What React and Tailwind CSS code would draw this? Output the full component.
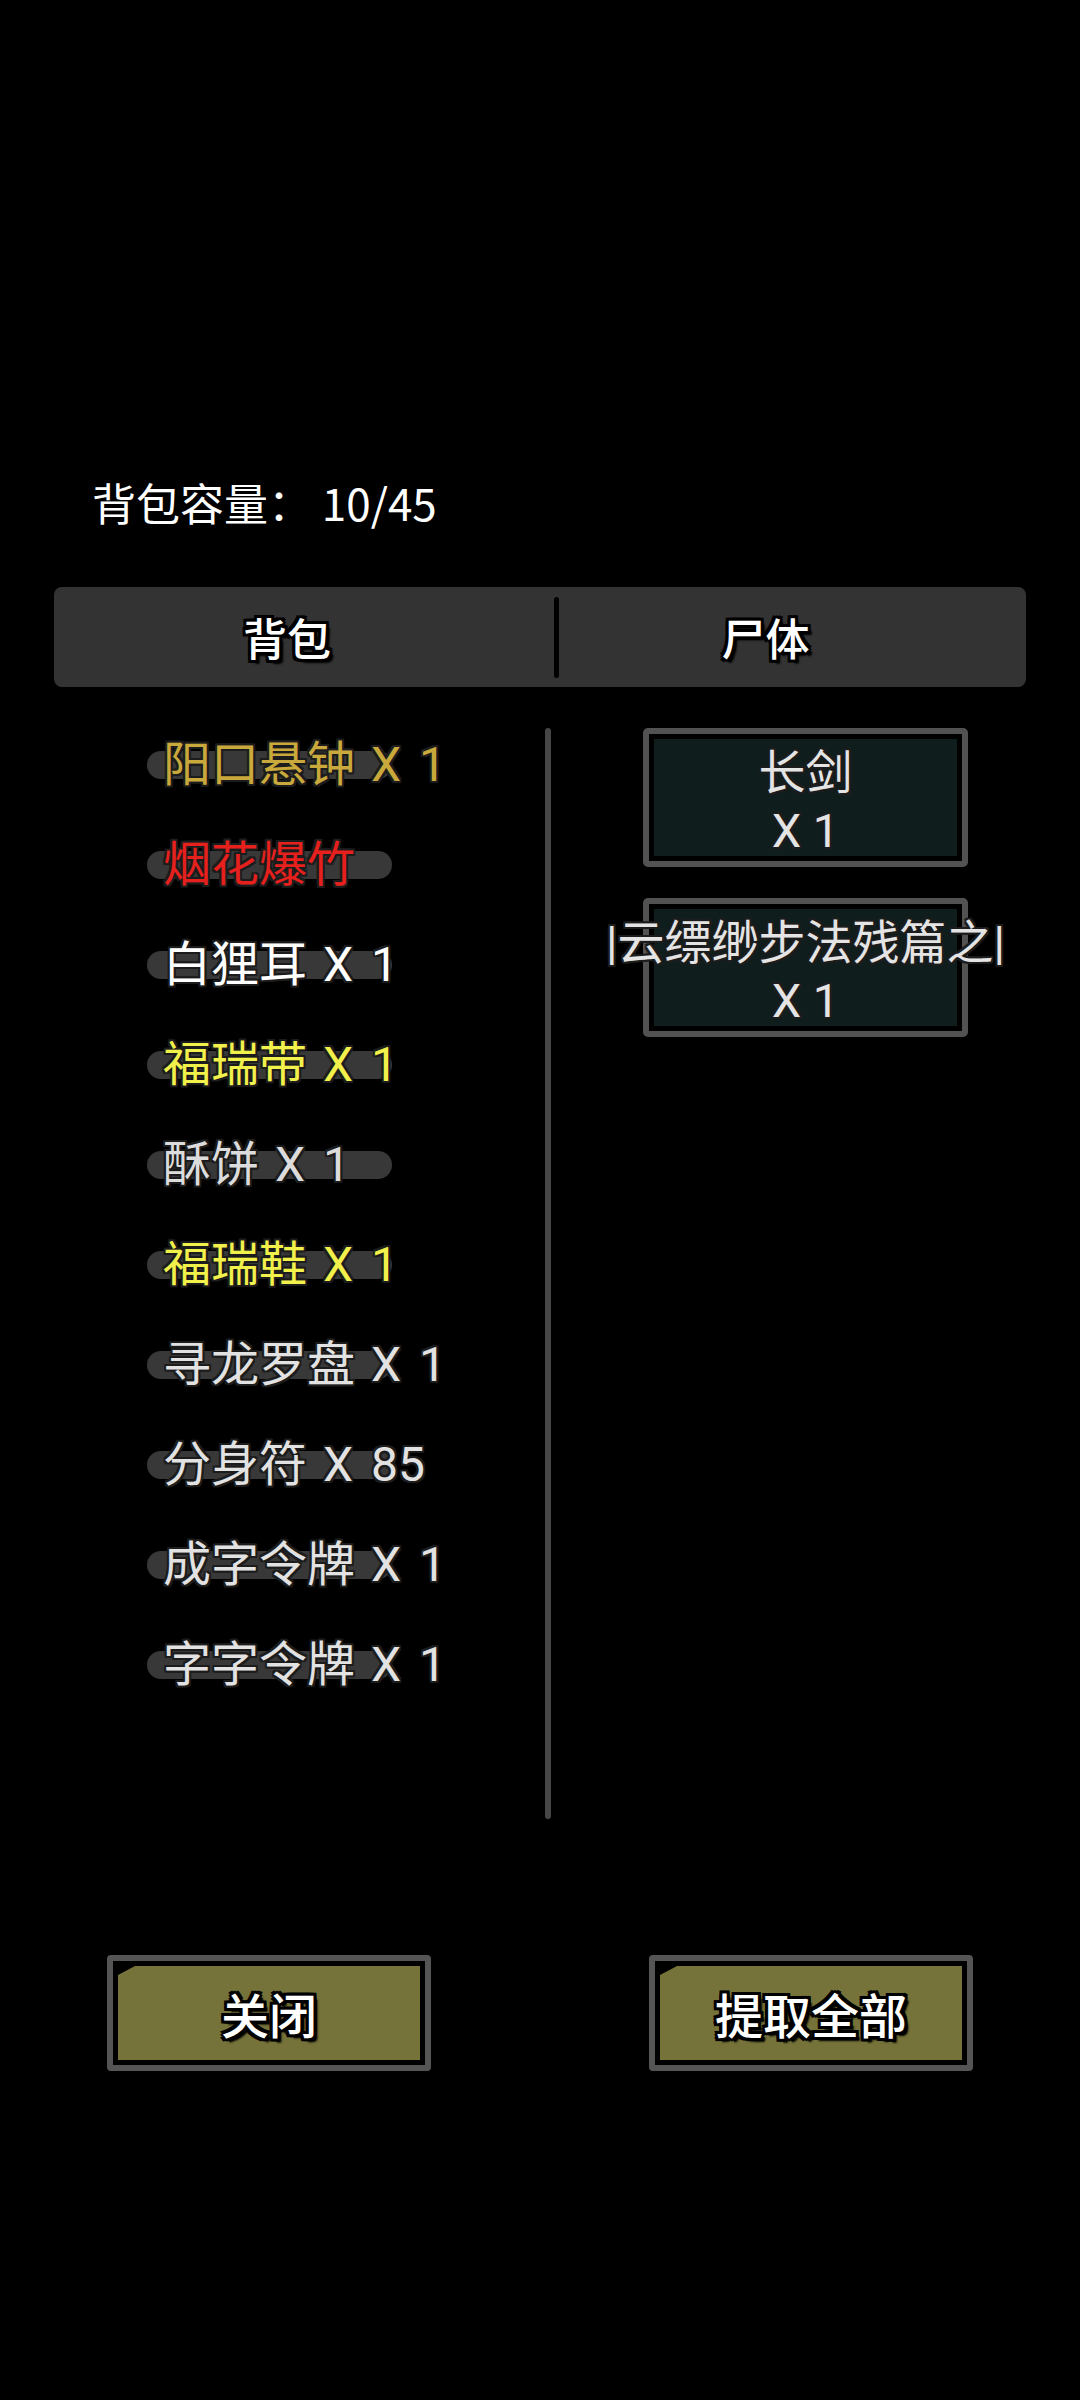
import React from 'react'

const outline = '[text-shadow:-3px_-3px_0_#000,3px_-3px_0_#000,-3px_3px_0_#000,3px_3px_0_#000,0_3px_0_#000,0_-3px_0_#000,3px_0_0_#000,-3px_0_0_#000,4px_4px_2px_#000]'
const soft = '[text-shadow:-2px_-2px_0_#1c1c1c,2px_-2px_0_#1c1c1c,-2px_2px_0_#1c1c1c,2px_2px_0_#1c1c1c,0_2px_0_#1c1c1c,0_-2px_0_#1c1c1c,2px_0_0_#1c1c1c,-2px_0_0_#1c1c1c]'

const bag = [
  { name: '阳口悬钟', count: '1', color: 'text-[#c9a93b]' },
  { name: '烟花爆竹', count: '', color: 'text-[#e5201d]' },
  { name: '白狸耳', count: '1', color: 'text-white' },
  { name: '福瑞带', count: '1', color: 'text-[#f2f04a]' },
  { name: '酥饼', count: '1', color: 'text-[#dcdcdc]' },
  { name: '福瑞鞋', count: '1', color: 'text-[#f2f04a]' },
  { name: '寻龙罗盘', count: '1', color: 'text-[#e2e2e2]' },
  { name: '分身符', count: '85', color: 'text-[#e2e2e2]' },
  { name: '成字令牌', count: '1', color: 'text-[#e2e2e2]' },
  { name: '字字令牌', count: '1', color: 'text-[#e2e2e2]' },
]

const Button = ({ label }) => (
  <div className="w-[324px] h-[116px] rounded-[4px] border-[6px] border-[#555555] bg-black p-[5px]">
    <div className="h-full w-full bg-[#757339] [clip-path:polygon(17px_0,100%_0,100%_100%,0_100%,0_9px)] flex items-center justify-center">
      <span className={`text-[48px] leading-none font-medium text-white ${outline}`}>{label}</span>
    </div>
  </div>
)

const Box = ({ children }) => (
  <div className="w-[325px] h-[139px] rounded-[5px] border-[6px] border-[#525252] bg-black p-[5px]">
    <div className={`h-full w-full bg-[#0f1d1d] flex flex-col items-center pt-[5px] text-[47px] leading-[58px] whitespace-nowrap text-[#e4e4e4] font-['Roboto','Noto_Sans_CJK_SC',sans-serif] ${soft}`}>
      {children}
    </div>
  </div>
)

const App = () => {
  return (
    <div className="w-[1080px] h-[2400px] bg-black font-['Noto_Sans_CJK_SC','Noto_Sans',sans-serif] overflow-hidden">
      <div className="pt-[476px] pl-[92px] h-[528px] text-[44px] leading-[52px] text-white whitespace-pre">
        背包容量： 10/45
      </div>

      <div className="mx-[54px] mt-[59px] h-[100px] rounded-[8px] bg-[#333333] flex items-center">
        <div className="w-[500px] flex justify-center pr-[34px]">
          <span className={`text-[44px] font-medium text-white ${outline}`}>背包</span>
        </div>
        <div className="w-[5px] h-[81px] rounded-full bg-black"></div>
        <div className="flex-1 flex justify-center pr-[54px]">
          <span className={`text-[44px] font-medium text-white ${outline}`}>尸体</span>
        </div>
      </div>

      <div className="flex pl-[54px] pr-[54px] mt-[25px]">
        <div className="w-[503px] flex">
          <ul className="flex-1 pt-[3px]">
            {bag.map((item, index) => (
              <li key={index} className="h-[100px] flex items-center pl-[93px]">
                <div className="relative">
                  <div className="absolute left-0 top-1/2 -translate-y-1/2 w-[245px] h-[28px] rounded-full bg-[#383838]"></div>
                  <span className={`relative flex pl-[16px] text-[48px] leading-none whitespace-nowrap font-['Roboto','Noto_Sans_CJK_SC',sans-serif] ${item.color} ${soft}`}>
                    <span>{item.name}</span>
                    {item.count && (
                      <>
                        <span className="ml-[16px]">X</span>
                        <span className="ml-[18px]">{item.count}</span>
                      </>
                    )}
                  </span>
                </div>
              </li>
            ))}
          </ul>
          <div className="w-[6px] h-[1091px] mt-[16px] mr-[6px] rounded-full bg-[#464646]"></div>
        </div>

        <div className="flex-1 flex flex-col items-center pt-[16px] pl-[28px] gap-[31px]">
          <Box>
            <span>长剑</span>
            <span>X 1</span>
          </Box>
          <Box>
            <span>|云缥缈步法残篇之|</span>
            <span>X 1</span>
          </Box>
        </div>
      </div>

      <div className="flex justify-between pl-[107px] pr-[107px] mt-[136px]">
        <Button label="关闭" />
        <Button label="提取全部" />
      </div>
    </div>
  )
}

export default App
